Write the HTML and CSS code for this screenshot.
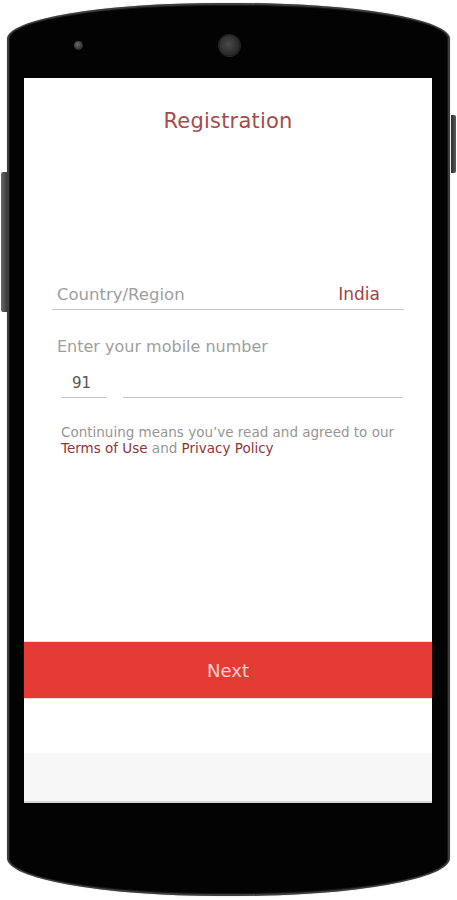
FILE: index.html
```html
<!DOCTYPE html>
<html lang="en">
<head>
<meta charset="utf-8">
<title>Registration</title>
<link rel="stylesheet" href="styles.css">
</head>
<body>
<div class="stage">
  <div class="side-btn side-left"></div>
  <div class="side-btn side-right"></div>
  <div class="phone">
    <div class="bezel-top">
      <span class="sensor"></span>
      <span class="camera"></span>
    </div>
    <div class="screen">
      <div class="content">
        <h1 class="title">Registration</h1>
        <div class="field country">
          <span class="label">Country/Region</span>
          <span class="value">India</span>
        </div>
        <div class="mobile-label">Enter your mobile number</div>
        <div class="phone-row">
          <div class="code">91</div>
          <div class="number"></div>
        </div>
        <p class="terms">Continuing means you’ve read and agreed to our <a class="link">Terms of Use</a> and <a class="link">Privacy Policy</a></p>
      </div>
      <div class="next">Next</div>
      <div class="spacer"></div>
      <div class="navbar"></div>
    </div>
  </div>
</div>
</body>
</html>
```

FILE: styles.css
```css
html, body {
  margin: 0;
  padding: 0;
  background: #ffffff;
}
body {
  width: 457px;
  height: 900px;
  overflow: hidden;
  font-family: "Century Gothic", "DejaVu Sans", sans-serif;
}
.stage {
  position: relative;
  width: 457px;
  height: 900px;
  padding: 3px 0 0 7px;
  box-sizing: border-box;
}
.side-btn {
  position: absolute;
  background: linear-gradient(to right, #6a6a6a, #3a3a3a);
}
.side-left {
  left: 1px;
  top: 172px;
  width: 6px;
  height: 140px;
  border-radius: 2px 0 0 2px;
}
.side-right {
  left: 451px;
  top: 115px;
  width: 5px;
  height: 58px;
  border-radius: 0 2px 2px 0;
  background: linear-gradient(to left, #5a5a5a, #2e2e2e);
}
.phone {
  width: 443px;
  height: 893px;
  box-sizing: border-box;
  background: #030303;
  border: 2px solid #3d3d3d;
  border-radius: 48% 48% 48% 48% / 36px 36px 38px 38px;
  box-shadow: inset 0 0 0 1px #161616, 0 0 1px #888;
  display: flex;
  flex-direction: column;
  align-items: center;
}
.bezel-top {
  width: 100%;
  height: 73px;
  display: flex;
  align-items: center;
  padding-top: 8px;
  box-sizing: border-box;
}
.sensor {
  width: 9px;
  height: 9px;
  border-radius: 50%;
  background: radial-gradient(circle at 40% 40%, #6a6a6a, #2a2a2a 70%);
  margin-left: 65px;
}
.camera {
  width: 21px;
  height: 21px;
  border-radius: 50%;
  background: radial-gradient(circle at 45% 45%, #4a4a4a, #2c2c2c 60%, #1a1a1a);
  box-shadow: 0 0 0 1px #222;
  margin-left: 136px;
}
.screen {
  width: 408px;
  height: 725px;
  margin-left: -1px;
  background: #ffffff;
  display: flex;
  flex-direction: column;
}
.content {
  height: 564px;
  padding: 0 28px 0 28px;
  box-sizing: border-box;
}
.title {
  margin: 0;
  padding-top: 29px;
  font-size: 21px;
  font-weight: normal;
  line-height: 28px;
  color: #a54c4c;
  text-align: center;
  letter-spacing: 0.2px;
}
.field {
  margin-top: 148px;
  display: flex;
  justify-content: space-between;
  align-items: baseline;
  border-bottom: 1px solid #c9c9c9;
  padding: 0 24px 3px 5px;
  font-size: 16.5px;
  line-height: 22px;
}
.label {
  color: #9e9e9e;
}
.value {
  color: #a04444;
  font-size: 17px;
}
.mobile-label {
  margin-top: 26px;
  padding-left: 5px;
  font-size: 16px;
  line-height: 22px;
  color: #9e9e9e;
}
.phone-row {
  display: flex;
  gap: 16px;
  margin-top: 15px;
  padding: 0 0 0 9px;
}
.code {
  width: 46px;
  box-sizing: border-box;
  padding: 0 0 4px 11px;
  border-bottom: 1px solid #c9c9c9;
  font-size: 15px;
  line-height: 20px;
  color: #555555;
}
.number {
  flex: 1;
  margin-right: 1px;
  border-bottom: 1px solid #c9c9c9;
}
.terms {
  margin: 26px 0 0 9px;
  font-size: 13.5px;
  line-height: 16px;
  color: #969696;
}
.link {
  color: #8a3838;
}
.next {
  height: 56px;
  background: #e53b35;
  color: #f7d2cd;
  font-size: 18px;
  display: flex;
  align-items: center;
  justify-content: center;
  box-shadow: 0 0 1px #a33;
}
.spacer {
  height: 55px;
}
.navbar {
  flex: 1;
  background: #f7f7f7;
  border-bottom: 2px solid #d6d6d6;
}
```
